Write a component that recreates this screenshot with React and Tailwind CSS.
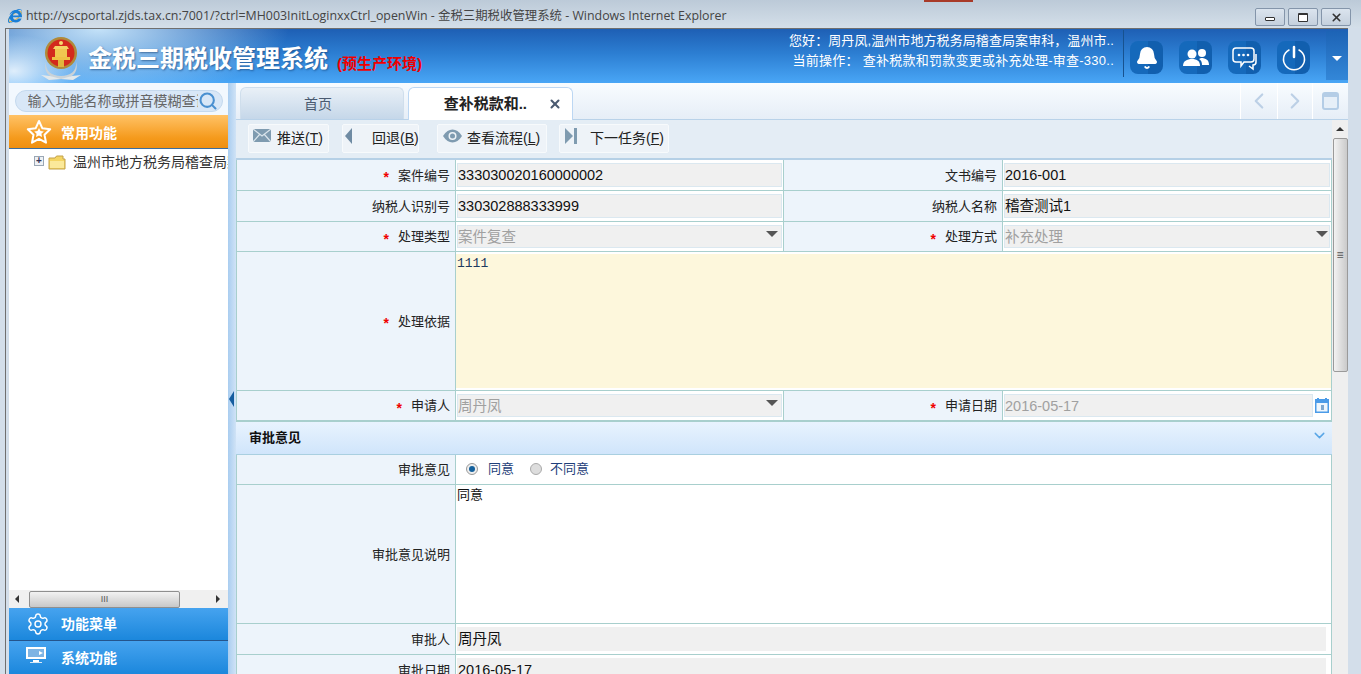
import { Bell, ChevronDown, ChevronLeft, ChevronRight, Search, Settings, X } from "lucide-react";
import { FaInternetExplorer } from "react-icons/fa";

const cjk = "font-['Liberation_Sans','Noto_Sans_CJK_SC',sans-serif]";

function Emblem() {
  return (
    <svg width="44" height="46" viewBox="0 0 44 46" className="mt-[5px] shrink-0">
      <path d="M7 26c-1 9 6 14 15 14s16-5 15-14c3 9-3 17-15 17S4 35 7 26z" fill="#c9d2d8" />
      <path d="M2 39l9 1 11 3 11-3 9-1-8 5-12-1-12 1z" fill="#e3e8ea" />
      <circle cx="22" cy="17" r="16" fill="#b08a3a" />
      <circle cx="22" cy="17" r="13.5" fill="#d32a1d" />
      <path d="M13 21h18v3H13z" fill="#eec245" />
      <path d="M16 13h12v8H16z" fill="#f0c750" />
      <path d="M14 13h16l-2-3H16z" fill="#f5d465" />
      <circle cx="22" cy="7" r="2" fill="#f7dc6e" />
      <path d="M19 24h6v7h-6z" fill="#e0b53d" />
    </svg>
  );
}

function HeaderButton({ children }) {
  return (
    <div className="flex h-[33px] w-[33px] items-center justify-center rounded-lg bg-[linear-gradient(90deg,#1569bb_0%,#1569bb_55%,#115fae_55%,#115fae_100%)]">
      {children}
    </div>
  );
}

function Header() {
  return (
    <div className="flex h-[54px] shrink-0 bg-[radial-gradient(ellipse_60px_36px_at_5px_42px,rgba(255,255,255,0.8),transparent),radial-gradient(ellipse_190px_70px_at_90px_0px,rgba(205,233,252,0.95),transparent),linear-gradient(180deg,#1e5fb4_0%,#2c7ed2_45%,#49a6f6_100%)]">
      <div className="flex w-[779px] items-center pl-[30px]">
        <Emblem />
        <span className="mt-[6px] ml-[5px] text-[24px] leading-none font-bold text-white [text-shadow:1px_1px_2px_rgba(20,60,110,0.6)]">
          金税三期税收管理系统
        </span>
        <span className="mt-[16px] ml-[9px] text-[15px] font-bold text-[#f00000]">(预生产环境)</span>
      </div>
      <div className="flex w-[326px] flex-col items-end pt-[2px] text-[13px] leading-[20px] whitespace-nowrap text-white">
        <div className="tracking-[0.08px]">您好：周丹凤,温州市地方税务局稽查局案审科，温州市..</div>
        <div className="tracking-[0.25px]">当前操作： 查补税款和罚款变更或补充处理-审查-330..</div>
      </div>
      <div className="ml-[9px] flex flex-1">
        <span className="mt-px h-[47px] w-px bg-[#17528f]" />
        <div className="mt-[12px] ml-[6px] flex gap-[16px]">
          <HeaderButton>
            <Bell size={24} fill="#fff" stroke="#fff" />
          </HeaderButton>
          <HeaderButton>
            <svg width="26" height="20" viewBox="0 0 26 20" fill="#fff">
              <circle cx="9" cy="6" r="4.5" />
              <circle cx="19" cy="5" r="4" />
              <path d="M0 18c0-5 4-7 9-7s8 2 8 7z" />
              <path d="M18 10c5 0 8 2 8 7h-7c0-3-1-5-3-6z" />
            </svg>
          </HeaderButton>
          <HeaderButton>
            <svg width="26" height="26" viewBox="0 0 26 26" fill="none" stroke="#fff" strokeWidth="1.5">
              <path d="M4 3h15a3 3 0 0 1 3 3v8a3 3 0 0 1-3 3h-7l-3 4v-4H4a3 3 0 0 1-3-3V6a3 3 0 0 1 3-3z" />
              <path d="M24 9v8c0 2-1 3-3 3v4l-4-3" />
              <circle cx="7" cy="10" r="0.6" fill="#fff" />
              <circle cx="11.5" cy="10" r="0.6" fill="#fff" />
              <circle cx="16" cy="10" r="0.6" fill="#fff" />
            </svg>
          </HeaderButton>
          <HeaderButton>
            <svg width="26" height="26" viewBox="0 0 26 26" fill="none" stroke="#fff" strokeLinecap="round">
              <path d="M8 5a10.5 10.5 0 1 0 10 0" strokeWidth="1.5" />
              <path d="M13 2v10" strokeWidth="2.5" />
            </svg>
          </HeaderButton>
        </div>
        <div className="mt-[2px] ml-[16px] flex h-[49px] flex-1 items-center justify-center bg-[linear-gradient(180deg,#1d63b5,#3387d8)] pt-[5px]">
          <span className="h-0 w-0 border-x-[5px] border-t-[5px] border-x-transparent border-t-white" />
        </div>
      </div>
    </div>
  );
}

function AccordionBar({ icon, label, className }) {
  return (
    <div className={`flex items-center pl-[17px] text-[14px] font-bold text-white ${className}`}>
      <span className="flex w-[35px] justify-start">{icon}</span>
      {label}
    </div>
  );
}

function Sidebar() {
  return (
    <div className="flex w-[219px] shrink-0 flex-col bg-white">
      <div className="flex h-[32px] shrink-0 items-center justify-center bg-[#f2f8fe] pt-[4px]">
        <div className="flex h-[22px] w-[208px] items-center rounded-full border border-[#c4d9ee] bg-[#d8e7f7] pl-[12px] text-[14px] text-[#666]">
          <span className="w-[170px] shrink-0 overflow-hidden whitespace-nowrap">输入功能名称或拼音模糊查询</span>
          <Search size={20} strokeWidth={2.5} className="shrink-0 text-[#4a90d0]" />
        </div>
      </div>
      <AccordionBar
        className="h-[34px] shrink-0 border-b border-[#3d6d9d] bg-[linear-gradient(180deg,#ffc266,#f59a1c_70%,#ef8f10)] pt-[3px]"
        label="常用功能"
        icon={
          <svg width="26" height="26" viewBox="0 0 26 26" className="-mt-[3px]">
            <path d="M13 2l3.4 7.3 7.8 1-5.7 5.5 1.5 7.9L13 19.8l-7 3.9 1.5-7.9L1.800 10.300l7.800-1z" fill="none" stroke="#fff" strokeWidth="2" strokeLinejoin="round" />
            <path d="M13 9l1.500 3 3.300.5-2.400 2.300.6 3.300L13 16.500l-3 1.600.6-3.300-2.400-2.300 3.300-.5z" fill="#fff" />
          </svg>
        }
      />
      <div className="flex flex-1 items-start overflow-hidden pt-[3px] pl-[25px] text-[14px] whitespace-nowrap text-[#333]">
        <span className="mt-[4px] flex h-[10px] w-[10px] shrink-0 items-center justify-center border border-[#9aa7b5] bg-[#eef1f5] text-[10px] leading-none font-bold text-[#335]">
          +
        </span>
        <svg width="18" height="15" viewBox="0 0 18 15" className="mt-[3px] ml-[4px] shrink-0">
          <path d="M1 3h6l1.500-2H15v3h2v10H1z" fill="#f4d564" stroke="#c2a14a" />
          <path d="M2 6h14v7H2z" fill="#fbe99a" />
        </svg>
        <span className="ml-[7px] w-[155px] overflow-hidden">温州市地方税务局稽查局案审科</span>
      </div>
      <div className="flex h-[18px] shrink-0 items-center bg-[#f0f0f0]">
        <span className="ml-[6px] h-0 w-0 border-y-[4px] border-r-[4px] border-y-transparent border-r-[#333]" />
        <div className="ml-[10px] flex h-[17px] w-[151px] items-center justify-center rounded-[2px] border border-[#8f8f8f] bg-[linear-gradient(180deg,#f2f2f2,#c8c8c8)] text-[9px] leading-none text-[#555]">
          III
        </div>
        <span className="ml-[36px] h-0 w-0 border-y-[4px] border-l-[4px] border-y-transparent border-l-[#333]" />
      </div>
      <AccordionBar
        className="h-[33px] shrink-0 border-b border-[#24548c] bg-[linear-gradient(180deg,#46a3ef,#1b87dc)]"
        label="功能菜单"
        icon={<Settings size={24} strokeWidth={1.400} />}
      />
      <AccordionBar
        className="h-[33px] shrink-0 bg-[linear-gradient(180deg,#46a3ef,#1b87dc)] pt-[2px]"
        label="系统功能"
        icon={
          <svg width="20" height="18" viewBox="0 0 20 18" className="-mt-[7px]">
            <path d="M0 1h20v12H0z" fill="#fff" />
            <path d="M2 3h16v8H2z" fill="#7eb4e4" />
            <path d="M13 5l4 2-4 2z" fill="#fff" />
            <path d="M7 14h6v2H7z" fill="#fff" />
            <path d="M4 16h12v1H4z" fill="#dbe9f6" />
          </svg>
        }
      />
    </div>
  );
}

function Splitter() {
  return (
    <div className="flex w-[8px] shrink-0 items-center bg-[linear-gradient(90deg,#a9cdf0,#d0e3f6)] pt-[34px]">
      <span className="mt-[6px] ml-[1px] h-0 w-0 border-y-[8px] border-r-[5px] border-y-transparent border-r-[#155d9f]" />
    </div>
  );
}

function TabBar() {
  return (
    <div className="flex h-[37px] shrink-0 items-end border-b border-[#b9d2e9] bg-[linear-gradient(180deg,#f8fcff,#e6eef7)] pl-[4px]">
      <div className="flex h-[32px] w-[164px] items-center justify-center rounded-t-[6px] border border-b-0 border-[#cfdeec] bg-[linear-gradient(180deg,#e9f0f7,#c5d7e9)] pt-[1px] pr-[8px] text-[14px] text-[#4a5a70]">
        首页
      </div>
      <div className="-mb-px ml-[4px] flex h-[33px] w-[165px] items-center justify-end rounded-t-[6px] border border-b-0 border-[#bcd7f3] bg-white pr-[10px] text-[15px] font-bold text-[#222]">
        <span className="mr-[21px] whitespace-nowrap">查补税款和..</span>
        <X size={14} strokeWidth={3.500} className="text-[#4a5a70]" />
      </div>
      <div className="ml-auto flex h-full text-[#bcd0e6]">
        <div className="flex w-[37px] items-center justify-center border-l border-white">
          <ChevronLeft size={26} strokeWidth={2} />
        </div>
        <div className="flex w-[35px] items-center justify-center border-l border-white">
          <ChevronRight size={26} strokeWidth={2} />
        </div>
        <div className="flex w-[36px] items-center justify-center border-l border-white">
          <span className="h-[18px] w-[17px] rounded-[3px] border-2 border-t-[5px] border-[#b4cde6] bg-[#e6eff8]" />
        </div>
      </div>
    </div>
  );
}

function ToolButton({ icon, label, hotkey, width, iconWidth, gap }) {
  return (
    <div
      className={`flex h-[29px] items-center rounded-[2px] border border-[#f7fafc] bg-[#eef3f8] text-[14px] text-[#222] ${width} ${gap}`}
    >
      <span className={`flex shrink-0 justify-center ${iconWidth}`}>{icon}</span>
      <span className="whitespace-nowrap">
        {label}(<span className="underline">{hotkey}</span>)
      </span>
    </div>
  );
}

function Toolbar() {
  return (
    <div className="flex h-[40px] shrink-0 items-center border-b-2 border-[#b5d0e6] bg-[#e4edf5] pb-[2px] pl-[12px]">
      <ToolButton
        width="w-[81px]"
        iconWidth="w-[28px]"
        gap="mr-[13px]"
        label="推送"
        hotkey="T"
        icon={
          <svg width="18" height="13" viewBox="0 0 18 13" className="-mt-[5px] mr-[3px]">
            <path d="M0 0h18v13H0z" fill="#7f9bb0" />
            <path d="M0 0l9 7 9-7M0 13l7-8M18 13l-7-8" fill="none" stroke="#dbe5ec" strokeWidth="1.200" />
          </svg>
        }
      />
      <ToolButton
        width="w-[77px]"
        iconWidth="w-[29px]"
        gap="mr-[18px]"
        label="回退"
        hotkey="B"
        icon={<span className="-mt-[5px] mr-[18px] h-0 w-0 border-y-[8px] border-r-[7px] border-y-transparent border-r-[#6f8ba3]" />}
      />
      <ToolButton
        width="w-[110px]"
        iconWidth="w-[29px]"
        gap="mr-[12px]"
        label="查看流程"
        hotkey="L"
        icon={
          <svg width="19" height="14" viewBox="0 0 19 14" className="-mt-[5px]">
            <path d="M0 7c3-4.500 6-6.500 9.500-6.500S16 2.500 19 7c-3 4.500-6 6.500-9.500 6.500S3 11.500 0 7z" fill="#7f9bb0" />
            <circle cx="9.500" cy="7" r="4" fill="#eef3f7" />
            <circle cx="9.500" cy="7" r="2.500" fill="#7f9bb0" />
          </svg>
        }
      />
      <ToolButton
        width="w-[110px]"
        iconWidth="w-[30px]"
        gap=""
        label="下一任务"
        hotkey="F"
        icon={
          <svg width="12" height="16" viewBox="0 0 12 16" className="-mt-[4px] mr-[8px]">
            <path d="M0 0l8 8-8 8z" fill="#7f9bb0" />
            <path d="M9 0h3v16H9z" fill="#7f9bb0" />
          </svg>
        }
      />
    </div>
  );
}

function Label({ children, required, indent }) {
  return (
    <div className="flex items-center justify-end bg-[#edf4fb] pt-px pr-[5px] text-[13px] text-[#222]">
      {required && <span className={`mt-[3px] text-[14px] leading-none font-bold text-[#f00000] ${indent}`}>*</span>}
      {children}
    </div>
  );
}

function Field({ children, disabled, arrowClass }) {
  return (
    <div className="bg-white px-px py-[3px]">
      <div
        className={`relative flex h-full items-center border border-[#dbe8f0] bg-[#f0f0f0] pt-px text-[14.500px] leading-none whitespace-nowrap ${
          disabled ? "text-[#a0a0a0]" : "text-[#111]"
        }`}
      >
        {children}
        {arrowClass && (
          <span className={`absolute top-[5px] h-0 w-0 border-x-[6px] border-t-[6px] border-x-transparent border-t-[#555] ${arrowClass}`} />
        )}
      </div>
    </div>
  );
}

function Row({ children, height }) {
  return (
    <div className={`grid grid-cols-[218px_327px_218px_1fr] gap-x-px border-b border-[#a8cfcd] bg-[#a8cfcd] ${height}`}>
      {children}
    </div>
  );
}

function WideRow({ children, height }) {
  return (
    <div className={`grid grid-cols-[218px_1fr] gap-x-px border-b border-[#a8cfcd] bg-[#a8cfcd] ${height}`}>
      {children}
    </div>
  );
}

function FormArea() {
  return (
    <div className="flex-1 overflow-hidden bg-white">
      <div className="border-x border-[#a8cfcd]">
        <Row height="h-[31px]">
          <Label required indent="mr-[9px]">案件编号</Label>
          <Field>333030020160000002</Field>
          <Label>文书编号</Label>
          <Field>2016-001</Field>
        </Row>
        <Row height="h-[31px]">
          <Label>纳税人识别号</Label>
          <Field>330302888333999</Field>
          <Label>纳税人名称</Label>
          <Field>稽查测试1</Field>
        </Row>
        <Row height="h-[30px]">
          <Label required indent="mr-[9px]">处理类型</Label>
          <Field disabled arrowClass="right-[3px]">案件复查</Field>
          <Label required indent="mr-[9px]">处理方式</Label>
          <Field disabled arrowClass="right-[1px]">补充处理</Field>
        </Row>
        <WideRow height="h-[139px]">
          <Label required indent="mr-[9px]">处理依据</Label>
          <div className="bg-white py-[2px]">
            <div className="h-full bg-[#fdf7dc] pt-[2px] pl-px font-['Liberation_Mono',monospace] text-[13px] leading-[15px] text-[#1c3a60]">
              1111
            </div>
          </div>
        </WideRow>
        <Row height="h-[30px]">
          <Label required indent="mr-[9px]">申请人</Label>
          <Field disabled arrowClass="right-[3px]">周丹凤</Field>
          <Label required indent="mr-[9px]">申请日期</Label>
          <div className="flex items-center bg-white py-[3px] pl-px">
            <div className="flex h-full w-[309px] items-center border border-[#dbe8f0] bg-[#f0f0f0] pt-px text-[14.500px] leading-none text-[#a0a0a0]">
              2016-05-17
            </div>
            <svg width="14" height="15" viewBox="0 0 14 15" className="ml-[2px]">
              <path d="M0 1h14v14H0z" fill="#4b9be8" />
              <path d="M2 0h2v2H2zM10 0h2v2h-2z" fill="#4b9be8" />
              <path d="M1.500 5h11v8.500h-11z" fill="#eef6fd" />
              <path d="M6 7h3v5H6z" fill="#7fa8cf" />
            </svg>
          </div>
        </Row>
      </div>
      <div className="flex h-[34px] items-center justify-between border-y border-y-[#a8cfcd] border-b-[#a9cfe0] bg-[linear-gradient(180deg,#e8f3fe,#d0e5fb)] pr-[4px] pb-px pl-[13px] text-[13px] font-bold text-[#111]">
        审批意见
        <ChevronDown size={17} strokeWidth={2} className="mb-[4px] text-[#58a6e6]" />
      </div>
      <div className="border-x border-[#a8cfcd]">
        <WideRow height="h-[30px]">
          <Label>审批意见</Label>
          <div className="flex items-center bg-white pb-px pl-[10px] text-[13px] text-[#1f3f7a]">
            <span className="flex h-[12px] w-[12px] items-center justify-center rounded-full border border-[#999] bg-[#eee]">
              <span className="h-[6px] w-[6px] rounded-full bg-[#14609c]" />
            </span>
            <span className="ml-[10px]">同意</span>
            <span className="ml-[16px] h-[12px] w-[12px] rounded-full border border-[#aaa] bg-[#ddd]" />
            <span className="ml-[8px]">不同意</span>
          </div>
        </WideRow>
        <WideRow height="h-[139px]">
          <Label>审批意见说明</Label>
          <div className="bg-white pt-[2px] pl-[1px] text-[13px] leading-[15px] text-[#111]">同意</div>
        </WideRow>
        <WideRow height="h-[31px]">
          <Label>审批人</Label>
          <div className="bg-white py-[3px] pr-[5px] pl-px">
            <div className="flex h-full items-center bg-[#f0f0f0] pl-px text-[14.500px] leading-none text-[#111]">周丹凤</div>
          </div>
        </WideRow>
        <WideRow height="h-[31px]">
          <Label>审批日期</Label>
          <div className="bg-white py-[3px] pr-[5px] pl-px">
            <div className="flex h-full items-center bg-[#f0f0f0] pl-px text-[14.500px] leading-none text-[#111]">2016-05-17</div>
          </div>
        </WideRow>
      </div>
    </div>
  );
}

function PageScrollbar() {
  return (
    <div className="flex w-[16px] shrink-0 flex-col items-center bg-[#efefef]">
      <div className="flex h-[18px] w-full items-center justify-center">
        <span className="h-0 w-0 border-x-[4px] border-b-[4px] border-x-transparent border-b-[#333]" />
      </div>
      <div className="flex h-[234px] w-[15px] items-center justify-center rounded-[2px] border border-[#9a9a9a] bg-[linear-gradient(90deg,#f2f2f2,#cacaca)] text-[12px] leading-none text-[#555]">
        ≡
      </div>
    </div>
  );
}

function WindowButton({ children }) {
  return (
    <div className="flex h-[18px] w-[30px] items-center justify-center rounded-[2px] border border-[#8495aa] bg-[linear-gradient(180deg,#dbe4ee,#c4d0dd)]">
      {children}
    </div>
  );
}

function TitleBar() {
  return (
    <div className="relative flex h-[28px] shrink-0 items-center bg-[linear-gradient(180deg,#bccad8,#d4dfe9)] pr-[10px] pl-[7px] font-['Open_Sans','Noto_Sans_CJK_SC',sans-serif] text-[12.400px] whitespace-nowrap text-[#444]">
      <span className="relative mt-[4px] flex h-[15px] w-[15px] items-center justify-center">
        <span className="absolute h-[7px] w-[16px] -rotate-[35deg] rounded-[50%] border border-[#e8b23a]" />
        <FaInternetExplorer size={14} className="relative text-[#1b7fd6]" />
      </span>
      <span className="mt-[5px] ml-[4px]">http://yscportal.zjds.tax.cn:7001/?ctrl=MH003InitLoginxxCtrl_openWin - 金税三期税收管理系统 - Windows Internet Explorer</span>
      <div className="absolute top-0 left-[924px] h-[2px] w-[49px] bg-[#a83a28]" />
      <div className="mt-[6px] ml-auto flex gap-[3px]">
        <WindowButton>
          <span className="mt-[4px] h-[4px] w-[10px] rounded-[1px] border border-[#333] bg-white" />
        </WindowButton>
        <WindowButton>
          <span className="h-[9px] w-[10px] rounded-[1px] border border-t-2 border-[#333] bg-white" />
        </WindowButton>
        <WindowButton>
          <X size={13} strokeWidth={3} className="text-[#333]" />
        </WindowButton>
      </div>
    </div>
  );
}

export default function App() {
  return (
    <div className={`flex h-[674px] w-[1361px] flex-col overflow-hidden bg-[#d3deea] ${cjk}`}>
      <TitleBar />
      <div className="mr-[13px] ml-[5px] flex min-h-0 flex-1 flex-col border-t border-l border-[#6f6f6f] pl-[3px]">
        <Header />
        <div className="flex min-h-0 flex-1">
          <Sidebar />
          <Splitter />
          <div className="flex min-w-0 flex-1 flex-col bg-[#e4edf5]">
            <TabBar />
            <div className="flex min-h-0 flex-1">
              <div className="flex min-w-0 flex-1 flex-col">
                <Toolbar />
                <FormArea />
              </div>
              <PageScrollbar />
            </div>
          </div>
        </div>
      </div>
    </div>
  );
}
